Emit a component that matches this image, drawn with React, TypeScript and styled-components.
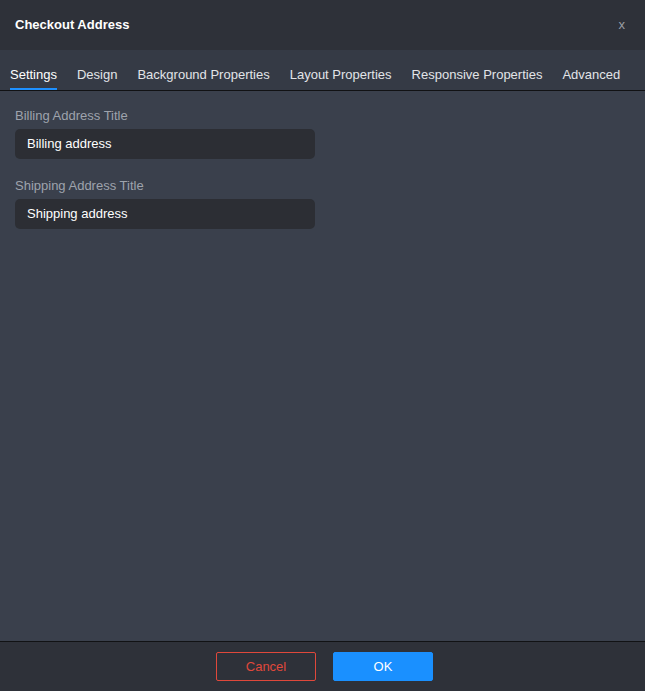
import styled, { createGlobalStyle } from "styled-components";

const GlobalStyle = createGlobalStyle`
  html, body {
    margin: 0;
    padding: 0;
    height: 100%;
  }
  body {
    font-family: "Liberation Sans", Arial, sans-serif;
    background: #3a404c;
  }
  #root {
    height: 100%;
  }
`;

const Dialog = styled.div`
  display: flex;
  flex-direction: column;
  width: 645px;
  height: 691px;
  background: #3a404c;
`;

const Header = styled.header`
  height: 50px;
  display: flex;
  align-items: center;
  justify-content: space-between;
  padding: 0 20px 2px 15px;
  background: #2e3139;
  box-sizing: border-box;
  flex-shrink: 0;
`;

const Title = styled.h1`
  margin: 0;
  font-size: 13px;
  font-weight: bold;
  color: #ffffff;
`;

const Close = styled.button`
  border: none;
  background: none;
  padding: 0;
  color: #9a9da4;
  font-family: inherit;
  font-size: 13px;
  cursor: pointer;
`;

const Tabs = styled.nav`
  height: 40px;
  display: flex;
  align-items: stretch;
  gap: 20px;
  padding: 0 10px;
  background: #353a45;
  border-bottom: 1px solid #111214;
  flex-shrink: 0;
`;

const Tab = styled.button<{ $active?: boolean }>`
  border: none;
  background: none;
  padding: 0 0 6px;
  display: flex;
  align-items: flex-end;
  font-family: inherit;
  font-size: 13px;
  color: ${(p) => (p.$active ? "#ffffff" : "#e2e4e8")};
  border-bottom: 2px solid ${(p) => (p.$active ? "#1e90ff" : "transparent")};
  cursor: pointer;
`;

const Body = styled.main`
  flex: 1;
  padding: 17px 15px;
  display: flex;
  flex-direction: column;
  gap: 19px;
`;

const Field = styled.div`
  display: flex;
  flex-direction: column;
  gap: 6px;
`;

const Label = styled.label`
  font-size: 13px;
  color: #9ea3ad;
`;

const Input = styled.input`
  width: 300px;
  height: 30px;
  box-sizing: border-box;
  padding: 0 12px 1px;
  border: none;
  border-radius: 5px;
  background: #2c2e34;
  color: #ffffff;
  font-family: inherit;
  font-size: 13px;
  outline: none;
`;

const Footer = styled.footer`
  height: 50px;
  box-sizing: border-box;
  display: flex;
  align-items: center;
  justify-content: center;
  gap: 17px;
  padding-left: 4px;
  background: #2e3139;
  border-top: 1px solid #111214;
  flex-shrink: 0;
`;

const Button = styled.button<{ $primary?: boolean }>`
  width: 100px;
  height: 29px;
  box-sizing: border-box;
  border-radius: 2px;
  font-family: inherit;
  font-size: 13px;
  cursor: pointer;
  border: 1px solid ${(p) => (p.$primary ? "#1a90ff" : "#e0483b")};
  background: ${(p) => (p.$primary ? "#1a90ff" : "transparent")};
  color: ${(p) => (p.$primary ? "#ffffff" : "#e0483b")};
`;

const tabs = [
  "Settings",
  "Design",
  "Background Properties",
  "Layout Properties",
  "Responsive Properties",
  "Advanced",
];

const App = () => {
  return (
    <>
      <GlobalStyle />
      <Dialog>
        <Header>
          <Title>Checkout Address</Title>
          <Close>x</Close>
        </Header>
        <Tabs>
          {tabs.map((t, i) => (
            <Tab key={t} $active={i === 0}>
              {t}
            </Tab>
          ))}
        </Tabs>
        <Body>
          <Field>
            <Label>Billing Address Title</Label>
            <Input defaultValue="Billing address" />
          </Field>
          <Field>
            <Label>Shipping Address Title</Label>
            <Input defaultValue="Shipping address" />
          </Field>
        </Body>
        <Footer>
          <Button>Cancel</Button>
          <Button $primary>OK</Button>
        </Footer>
      </Dialog>
    </>
  );
};

export default App;
